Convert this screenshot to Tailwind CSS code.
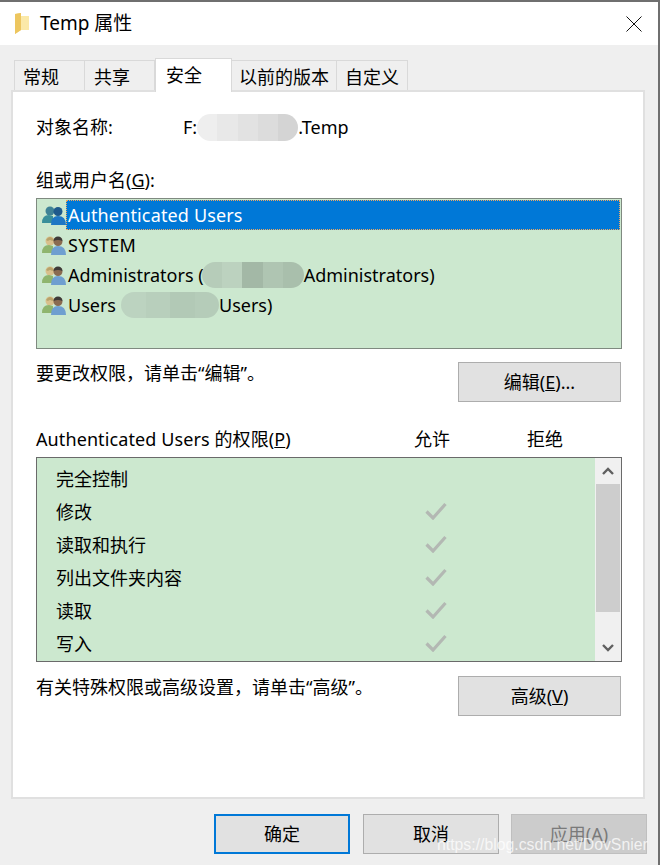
<!DOCTYPE html>
<html lang="zh-CN">
<head>
  <meta charset="UTF-8" />
  <title>Temp 属性</title>
  <script src="https://cdn.jsdelivr.net/npm/@tailwindcss/browser@4"></script>
</head>
<body class="font-['Noto_Sans','Noto_Sans_CJK_SC',sans-serif] text-[18px] leading-[24px] text-black">
  <svg class="hidden">
    <symbol id="people" viewBox="0 0 24 20">
      <circle cx="8" cy="6" r="4.5" fill="#d9c08c" />
      <path d="M4 5 Q8 -1 12 5 L10 6 Q8 4 6 6Z" fill="#b7a26a" />
      <path d="M0 18 Q0 10 7 10 L11 11 L11 18Z" fill="#8fb56e" />
      <circle cx="16" cy="6.5" r="4.5" fill="#8a6a50" />
      <path d="M11.5 6 Q12 1.5 16 1.5 Q20 1.5 20.5 6 Q16 4 11.5 6Z" fill="#3d3a38" />
      <path d="M9 20 Q9 11 16 11 Q24 11 24 20Z" fill="#6f9fd0" />
    </symbol>
    <symbol id="people-sel" viewBox="0 0 24 20">
      <circle cx="8" cy="6" r="4.5" fill="#3f8296" />
      <path d="M0 18 Q0 10 7 10 L11 11 L11 18Z" fill="#3a8f9a" />
      <circle cx="16" cy="6.5" r="4.5" fill="#1f5a8c" />
      <path d="M9 20 Q9 11 16 11 Q24 11 24 20Z" fill="#1f77c4" />
    </symbol>
    <symbol id="check" viewBox="0 0 22 18">
      <path d="M1.5 9.5 L8 16 L20.5 2" fill="none" stroke="#b3b8b3" stroke-width="3.2" />
    </symbol>
  </svg>

  <div class="relative w-[660px] h-[865px] overflow-hidden bg-[#efefef] border-t-2 border-r-2 border-[#6f6f6f]">
    <!-- title bar -->
    <div class="flex items-center justify-between h-[43px] bg-white pl-[15px] pr-[16px]">
      <div class="flex items-center">
        <svg width="15" height="21" viewBox="0 0 15 21">
          <path d="M0 1 L6 0 L6 3 L14 3 L14 17 L6 17 L0 21Z" fill="#f3d377" />
          <path d="M6 3 L14 3 L14 17 L6 17Z" fill="#fbe9a8" />
          <path d="M0 1 L6 0 L6 17 L0 21Z" fill="#edc65f" />
        </svg>
        <span class="ml-[10px] -mt-[2px] text-[19px]">Temp 属性</span>
      </div>
      <svg width="16" height="16" viewBox="0 0 16 16"><path d="M.5 .5 L15.5 15.5 M15.5 .5 L.5 15.5" stroke="#111" stroke-width="1" /></svg>
    </div>

    <!-- tabs -->
    <div class="relative z-10 flex items-end h-[45px] pl-[14px]">
      <div class="w-[71px] h-[30px] flex items-center pl-[8px] pt-[2px] border border-b-0 border-[#d9d9d9]">常规</div>
      <div class="w-[70px] h-[30px] flex items-center pl-[9px] pt-[2px] border border-l-0 border-b-0 border-[#d9d9d9]">共享</div>
      <div class="w-[77px] h-[34px] -mb-[2px] flex items-center pl-[10px] pb-[2px] bg-white border border-b-0 border-[#d9d9d9]">安全</div>
      <div class="w-[105px] h-[30px] flex items-center justify-center pt-[2px] border border-l-0 border-b-0 border-[#d9d9d9]">以前的版本</div>
      <div class="w-[71px] h-[30px] flex items-center justify-center pt-[2px] border border-l-0 border-b-0 border-[#d9d9d9]">自定义</div>
    </div>

    <!-- panel -->
    <div class="ml-[11px] w-[634px] h-[709px] bg-white border-2 border-[#e0e0e0] pl-[23px] pr-[22px] pt-[22px]">
      <div class="flex items-center h-[26px]">
        <span class="w-[147px]">对象名称:</span>
        <span>F:</span>
        <span class="flex w-[101px] h-[27px] rounded-full overflow-hidden">
          <i class="flex-1 bg-[#eeeeee]"></i><i class="flex-1 bg-[#e8e8e8]"></i><i class="flex-1 bg-[#e2e2e2]"></i><i class="flex-1 bg-[#dcdcdc]"></i><i class="flex-1 bg-[#d4d4d4]"></i>
        </span>
        <span>.Temp</span>
      </div>

      <div class="mt-[28px] h-[24px]">组或用户名(<u>G</u>):</div>

      <div class="mt-[6px] w-[586px] h-[151px] bg-[#cce8cf] border border-[#7f8a80] p-[1px]">
        <div class="flex items-center h-[30px]">
          <svg class="ml-[4px] w-[24px] h-[20px]"><use href="#people-sel" /></svg>
          <span class="w-[554px] h-[30px] pl-[1px] flex items-center bg-[#0078d7] text-white tracking-[0.15px] border border-dotted border-[#f0a860]">Authenticated Users</span>
        </div>
        <div class="flex items-center h-[30px]">
          <svg class="ml-[4px] w-[24px] h-[20px]"><use href="#people" /></svg>
          <span class="ml-[2px] tracking-[0.3px]">SYSTEM</span>
        </div>
        <div class="flex items-center h-[30px]">
          <svg class="ml-[4px] w-[24px] h-[20px]"><use href="#people" /></svg>
          <span class="ml-[2px]">Administrators (</span>
          <span class="flex w-[102px] h-[26px] -ml-[2px] rounded-full overflow-hidden">
            <i class="flex-1 bg-[#b6ccb9]"></i><i class="flex-1 bg-[#bcd2bf]"></i><i class="flex-1 bg-[#a3b8a6]"></i><i class="flex-1 bg-[#afc5b2]"></i><i class="flex-1 bg-[#a9bfac]"></i>
          </span>
          <span>Administrators)</span>
        </div>
        <div class="flex items-center h-[30px]">
          <svg class="ml-[4px] w-[24px] h-[20px]"><use href="#people" /></svg>
          <span class="ml-[2px]">Users</span>
          <span class="flex w-[98px] h-[26px] ml-[5px] rounded-full overflow-hidden">
            <i class="flex-1 bg-[#bcd3c0]"></i><i class="flex-1 bg-[#b8cfbc]"></i><i class="flex-1 bg-[#b2c9b6]"></i><i class="flex-1 bg-[#b5ccb9]"></i>
          </span>
          <span>Users)</span>
        </div>
      </div>

      <div class="mt-[13px] flex justify-between w-[585px] h-[40px]">
        <span class="-mt-[1px]">要更改权限，请单击“编辑”。</span>
        <button class="w-[163px] h-[40px] bg-[#e1e1e1] border border-[#adadad]">编辑(<u>E</u>)...</button>
      </div>

      <div class="mt-[25px] flex h-[24px]">
        <span class="w-[378px] tracking-[0.1px]">Authenticated Users 的权限(<u>P</u>)</span>
        <span class="w-[113px]">允许</span>
        <span>拒绝</span>
      </div>

      <div class="mt-[6px] flex w-[586px] h-[205px] bg-[#cce8cf] border border-[#6a6a6a]">
        <div class="flex-1 pt-[4px] pl-[19px]">
          <div class="flex items-center h-[33px]">完全控制</div>
          <div class="relative flex items-center h-[33px]">修改<svg class="absolute left-[369px] top-[7px] w-[22px] h-[18px]"><use href="#check" /></svg></div>
          <div class="relative flex items-center h-[33px]">读取和执行<svg class="absolute left-[369px] top-[7px] w-[22px] h-[18px]"><use href="#check" /></svg></div>
          <div class="relative flex items-center h-[33px]">列出文件夹内容<svg class="absolute left-[369px] top-[7px] w-[22px] h-[18px]"><use href="#check" /></svg></div>
          <div class="relative flex items-center h-[33px]">读取<svg class="absolute left-[369px] top-[7px] w-[22px] h-[18px]"><use href="#check" /></svg></div>
          <div class="relative flex items-center h-[33px]">写入<svg class="absolute left-[369px] top-[7px] w-[22px] h-[18px]"><use href="#check" /></svg></div>
        </div>
        <div class="flex flex-col w-[26px] bg-[#f0f0f0]">
          <div class="flex items-center justify-center h-[26px]">
            <svg width="12" height="8" viewBox="0 0 12 8"><path d="M1 7 L6 2 L11 7" fill="none" stroke="#606060" stroke-width="2.4" /></svg>
          </div>
          <div class="ml-[1px] w-[24px] h-[128px] bg-[#cdcdcd]"></div>
          <div class="flex flex-1 items-end justify-center pb-[9px]">
            <svg width="12" height="8" viewBox="0 0 12 8"><path d="M1 1 L6 6 L11 1" fill="none" stroke="#606060" stroke-width="2.4" /></svg>
          </div>
        </div>
      </div>

      <div class="mt-[14px] flex justify-between w-[585px] h-[40px]">
        <span class="-mt-[1px]">有关特殊权限或高级设置，请单击“高级”。</span>
        <button class="w-[163px] h-[40px] bg-[#e1e1e1] border border-[#adadad]">高级(<u>V</u>)</button>
      </div>
    </div>

    <!-- footer buttons -->
    <div class="flex mt-[15px] ml-[214px] gap-[13px]">
      <button class="w-[136px] h-[40px] bg-[#e1e1e1] border-2 border-[#0078d7]">确定</button>
      <button class="w-[136px] h-[40px] bg-[#e1e1e1] border border-[#adadad]">取消</button>
      <button class="w-[136px] h-[40px] -ml-[1px] bg-[#cccccc] border border-[#bfbfbf] text-[#7a7a7a]">应用(A)</button>
    </div>

    <!-- watermark -->
    <div class="absolute left-[437px] top-[833px] font-['Liberation_Sans',sans-serif] text-[15.8px] leading-[20px] text-white/75">https://blog.csdn.net/DovSnier</div>
  </div>
</body>
</html>
